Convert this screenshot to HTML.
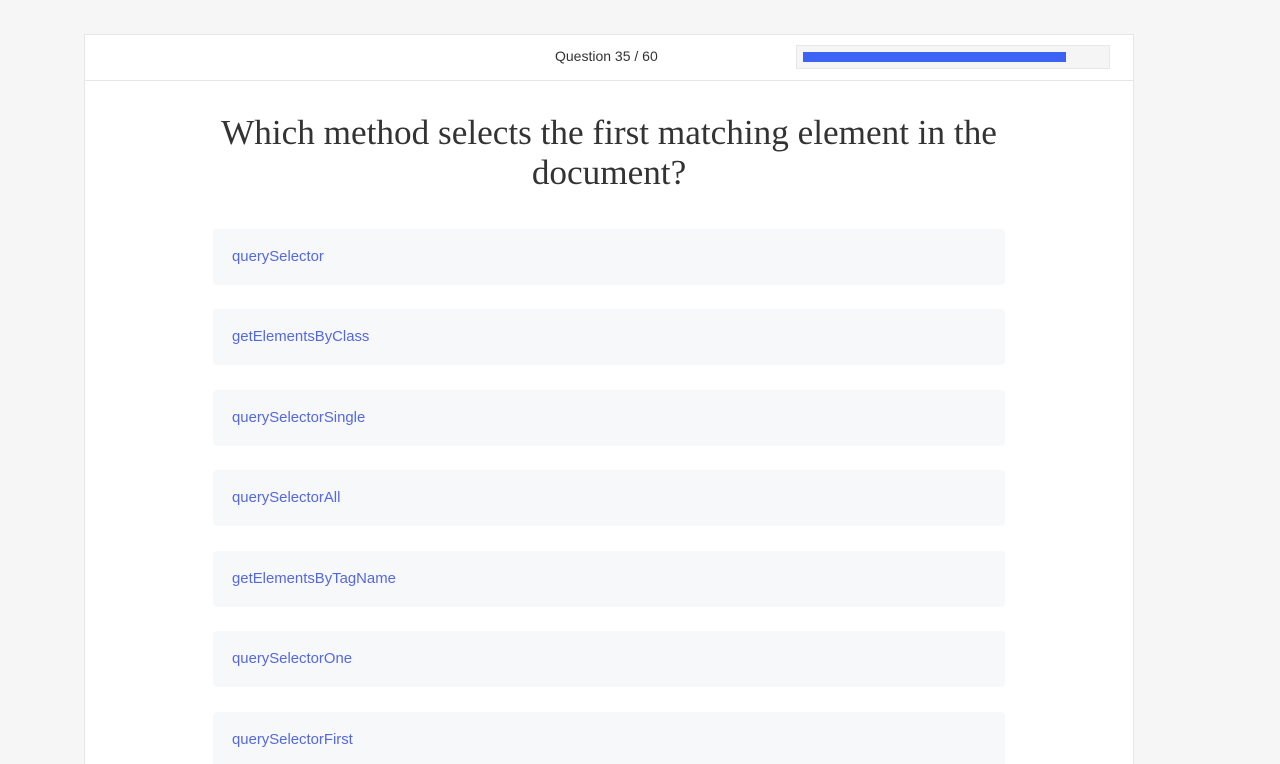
<!DOCTYPE html><html><head><style>
html,body{margin:0;height:764px;overflow:hidden}
body{background:#f6f6f6;width:1280px;font-family:"Liberation Sans",sans-serif;position:relative}
.card{position:absolute;left:84px;top:34px;width:1048px;height:740px;background:#fff;border:1px solid #e6e6e6;border-bottom:none}
.hdr{height:45px;border-bottom:1px solid #e6e6e6;position:relative}
.q{position:absolute;left:470px;top:13px;font-size:14px;color:#333}
.track{position:absolute;left:711px;top:10px;width:312px;height:22px;background:#f5f5f5;border:1px solid #e8e8e8}
.bar{position:absolute;left:6px;top:6px;width:263px;height:10px;background:#3d63f5}
h1{position:absolute;left:0;top:78px;width:1048px;margin:0;text-align:center;font-family:"Liberation Serif",serif;font-weight:normal;font-size:35.2px;line-height:40px;color:#333}
.o{position:absolute;left:128px;width:792px;height:56px;background:#f7f8f9;border-radius:4px;font-size:14.9px;color:#5468e0;line-height:56px;box-sizing:border-box;padding-left:19px}
</style></head><body><div class="card"><div class="hdr"><div class="q">Question 35 / 60</div><div class="track"><div class="bar"></div></div></div>
<h1>Which method selects the first matching element in the<br>document?</h1>
<div class="o" style="top:194px">querySelector</div>
<div class="o" style="top:274px">getElementsByClass</div>
<div class="o" style="top:355px">querySelectorSingle</div>
<div class="o" style="top:435px">querySelectorAll</div>
<div class="o" style="top:516px">getElementsByTagName</div>
<div class="o" style="top:596px">querySelectorOne</div>
<div class="o" style="top:677px">querySelectorFirst</div>
</div></body></html>
